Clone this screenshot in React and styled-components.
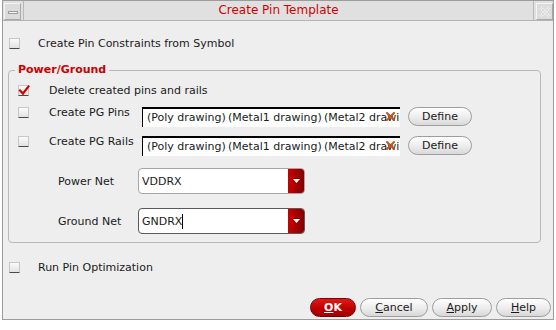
import React from "react";
import styled, { createGlobalStyle } from "styled-components";

const Global = createGlobalStyle`
  html, body { margin: 0; padding: 0; background: #ffffff; }
  body { font-family: "DejaVu Sans", "Noto Sans", sans-serif; font-size: 11px; color: #1a1a1a; }
  * { box-sizing: border-box; }
`;

const Page = styled.div`
  width: 556px;
  height: 330px;
  padding-left: 2px;
  background: #ffffff;
`;

const Window = styled.div`
  width: 552px;
  height: 320px;
  border: 1px solid #9c9c9c;
  background-color: #eeeeee;
  background-image: radial-gradient(rgba(0,0,0,0.025) 0.6px, transparent 0.7px);
  background-size: 2px 2px;
  display: flex;
  flex-direction: column;
`;

const TitleBar = styled.div`
  height: 20px;
  display: flex;
  align-items: stretch;
  background: #e0e0e0;
  border-bottom: 1px solid #b4b4b4;
`;

const TitleBtn = styled.div`
  width: 17px;
  margin: 2px 0 0 ${(p) => (p.$left ? "1px" : "0")};
  border-top: 1px solid #f4f4f4;
  border-left: 1px solid #f4f4f4;
  border-right: 1px solid #a8a8a8;
  border-bottom: 1px solid #a8a8a8;
  background: #dcdcdc;
  display: flex;
  align-items: center;
  justify-content: center;
`;

const MinBar = styled.div`
  width: 10px;
  height: 3px;
  margin-top: 2px;
  background: #fafafa;
  border: 1px solid #9a9a9a;
`;

const Title = styled.div`
  flex: 1;
  text-align: center;
  color: #d10000;
  font-size: 12px;
  line-height: 19px;
  border-left: 1px solid #b8b8b8;
  border-right: 1px solid #b8b8b8;
  margin: 0 2px;
`;

const Body = styled.div`
  flex: 1;
  padding: 12px 12px 0 5px;
  display: flex;
  flex-direction: column;
`;

const CheckRow = styled.div`
  height: 20px;
  display: flex;
  align-items: center;
  gap: ${(p) => p.$gap || 18}px;
  padding-left: ${(p) => (p.$indent === undefined ? 1 : p.$indent)}px;
  margin-top: ${(p) => p.$mt || 0}px;
`;

const Box = styled.div`
  width: 11px;
  height: 11px;
  flex: none;
  position: relative;
  background: linear-gradient(#fbfbfb, #e2e2e2);
  border: 1px solid #c6c6c6;
  border-bottom: 1px solid #4a4a4a;
  border-radius: 1px;
`;

const CheckMark = styled.svg`
  position: absolute;
  left: -1px;
  top: -2px;
`;

const Checkbox = ({ checked }) => (
  <Box>
    {checked && (
      <CheckMark width="12" height="12" viewBox="0 0 12 12">
        <path d="M2 6.5 L5 9.5 L10.5 2.5" fill="none" stroke="#d00000" strokeWidth="2.2" strokeLinecap="square" />
      </CheckMark>
    )}
  </Box>
);

const Text = styled.span`
  white-space: nowrap;
  line-height: 13px;
`;

const Group = styled.div`
  position: relative;
  margin-top: 17px;
  height: 173px;
  border: 1px solid #b9b9b9;
  border-radius: 4px;
  padding: 9px 0 0 9px;
  display: flex;
  flex-direction: column;
`;

const Legend = styled.div`
  position: absolute;
  left: 6px;
  top: -8px;
  padding: 0 3px;
  background: #eeeeee;
  color: #cc0000;
  font-weight: bold;
  font-size: 11px;
  line-height: 14px;
`;

const LayerRow = styled.div`
  display: flex;
  align-items: flex-start;
  margin-top: ${(p) => p.$mt}px;
`;

const LayerCheck = styled.div`
  display: flex;
  align-items: center;
  gap: 20px;
  width: 124px;
  height: 12px;
`;

const LayerField = styled.div`
  position: relative;
  width: 258px;
  height: 20px;
  margin-top: 1px;
  background: #ffffff;
  border-top: 2px solid #000000;
  border-left: 1px solid #000000;
  padding: 0 0 0 4px;
  overflow: hidden;
  white-space: nowrap;
  line-height: 18px;
`;

const ClearIcon = styled.svg`
  position: absolute;
  right: 5px;
  top: 3px;
`;

const DefineButton = styled.div`
  margin-left: 8px;
  margin-top: 1px;
  width: 64px;
  height: 19px;
  border-radius: 10px;
  border: 1px solid #9d9d9d;
  background: linear-gradient(#ffffff, #ececec 55%, #d9d9d9);
  display: flex;
  align-items: center;
  justify-content: center;
`;

const NetRow = styled.div`
  display: flex;
  align-items: center;
  margin-top: ${(p) => p.$mt}px;
  padding-left: 40px;
`;

const NetLabel = styled.div`
  width: 80px;
`;

const Combo = styled.div`
  width: 167px;
  height: 26px;
  display: flex;
  background: #ffffff;
  border: 1px solid ${(p) => (p.$focus ? "#5a5a5a" : "#a6a6a6")};
  border-radius: 4px;
  overflow: hidden;
`;

const ComboText = styled.div`
  flex: 1;
  display: flex;
  align-items: center;
  padding-left: 3px;
`;

const Caret = styled.div`
  width: 1px;
  height: 15px;
  background: #000;
`;

const ComboArrow = styled.div`
  width: 16px;
  background: linear-gradient(90deg, #c80000, #a00000 60%, #7e0000);
  display: flex;
  align-items: center;
  justify-content: center;
`;

const ButtonBar = styled.div`
  display: flex;
  justify-content: flex-end;
  gap: 4px;
  padding: 0 2px 2px 0;
`;

const DlgButton = styled.div`
  width: ${(p) => p.$w}px;
  height: 19px;
  border-radius: 10px;
  border: 1px solid ${(p) => (p.$primary ? "#7a0000" : "#9d9d9d")};
  background: ${(p) =>
    p.$primary
      ? "linear-gradient(#e01a1a, #c00000 55%, #a40000)"
      : "linear-gradient(#ffffff, #ececec 55%, #d8d8d8)"};
  color: ${(p) => (p.$primary ? "#ffffff" : "#1a1a1a")};
  font-weight: ${(p) => (p.$primary ? "bold" : "normal")};
  display: flex;
  align-items: center;
  justify-content: center;
`;

const U = styled.span`
  text-decoration: underline;
`;

const XIcon = () => (
  <ClearIcon width="9" height="9" viewBox="0 0 9 9">
    <path d="M1 1 L8 8 M8 1 L1 8" stroke="#c2561c" strokeWidth="2" strokeLinecap="round" />
  </ClearIcon>
);

const DownTri = () => (
  <svg width="7" height="4" viewBox="0 0 7 4">
    <path d="M0 0 H7 L3.5 4 Z" fill="#ffffff" />
  </svg>
);

const CloseGlyph = () => (
  <svg width="12" height="12" viewBox="0 0 12 12">
    <path d="M1.5 1.5 L10.5 10.5 M10.5 1.5 L1.5 10.5" stroke="#f6f6f6" strokeWidth="3" strokeDasharray="1 1" />
    <path d="M1.5 1.5 L10.5 10.5 M10.5 1.5 L1.5 10.5" stroke="#c8c8c8" strokeWidth="1" strokeDasharray="1 1" />
  </svg>
);

const layers = "(Poly drawing)\u2009(Metal1 drawing)\u2009(Metal2 drawing)";

export default function App() {
  return (
    <Page>
      <Global />
      <Window>
        <TitleBar>
          <TitleBtn $left>
            <MinBar />
          </TitleBtn>
          <Title>Create Pin Template</Title>
          <TitleBtn>
            <CloseGlyph />
          </TitleBtn>
        </TitleBar>
        <Body>
          <CheckRow>
            <Checkbox />
            <Text>Create Pin Constraints from Symbol</Text>
          </CheckRow>
          <Group>
            <Legend>Power/Ground</Legend>
            <CheckRow $indent={0} $gap={20}>
              <Checkbox checked />
              <Text>Delete created pins and rails</Text>
            </CheckRow>
            <LayerRow $mt={6}>
              <LayerCheck>
                <Checkbox />
                <Text>Create PG Pins</Text>
              </LayerCheck>
              <LayerField>
                {layers}
                <XIcon />
              </LayerField>
              <DefineButton>Define</DefineButton>
            </LayerRow>
            <LayerRow $mt={8}>
              <LayerCheck>
                <Checkbox />
                <Text>Create PG Rails</Text>
              </LayerCheck>
              <LayerField>
                {layers}
                <XIcon />
              </LayerField>
              <DefineButton>Define</DefineButton>
            </LayerRow>
            <NetRow $mt={12}>
              <NetLabel>Power Net</NetLabel>
              <Combo>
                <ComboText>VDDRX</ComboText>
                <ComboArrow>
                  <DownTri />
                </ComboArrow>
              </Combo>
            </NetRow>
            <NetRow $mt={14}>
              <NetLabel>Ground Net</NetLabel>
              <Combo $focus>
                <ComboText>
                  GNDRX
                  <Caret />
                </ComboText>
                <ComboArrow>
                  <DownTri />
                </ComboArrow>
              </Combo>
            </NetRow>
          </Group>
          <CheckRow $mt={14}>
            <Checkbox />
            <Text>Run Pin Optimization</Text>
          </CheckRow>
        </Body>
        <ButtonBar>
          <DlgButton $primary $w={46}>
            <span><U>O</U>K</span>
          </DlgButton>
          <DlgButton $w={68}>
            <span><U>C</U>ancel</span>
          </DlgButton>
          <DlgButton $w={60}>
            <span><U>A</U>pply</span>
          </DlgButton>
          <DlgButton $w={55}>
            <span><U>H</U>elp</span>
          </DlgButton>
        </ButtonBar>
      </Window>
    </Page>
  );
}
